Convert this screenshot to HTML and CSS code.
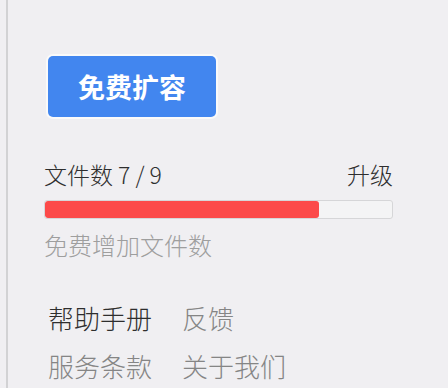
FILE: index.html
```html
<!doctype html>
<html>
<head>
	<meta charset="utf-8"/>
	<title>文件空间</title>
	<link rel="stylesheet" href="styles.css">
</head>
<body>
	<div class="panel">
		<button class="btn-expand">免费扩容</button>

		<div class="quota-row">
			<span class="quota-label">文件数 7 / 9</span>
			<span class="quota-upgrade">升级</span>
		</div>
		<div class="bar">
			<div class="bar-fill" style="width: 78.9%;"></div>
		</div>
		<div class="quota-tip">免费增加文件数</div>

		<div class="links">
			<div class="links-row">
				<span class="link link-dark">帮助手册</span>
				<span class="link">反馈</span>
			</div>
			<div class="links-row">
				<span class="link">服务条款</span>
				<span class="link">关于我们</span>
			</div>
		</div>
	</div>
</body>
</html>
```

FILE: styles.css
```css
html, body {
	margin: 0;
	height: 100%;
	background-color: #f0eff2;
}
body {
	font-family: "Noto Sans CJK SC", "Noto Sans", sans-serif;
	font-weight: 300;
	overflow: hidden;
}
.panel {
	margin-left: 6px;
	border-left: 2px solid #d2d2d4;
	height: 100%;
	padding: 56px 55px 0 36px;
	box-sizing: border-box;
}
.btn-expand {
	display: block;
	margin-left: 4px;
	width: 168px;
	height: 61px;
	border: none;
	border-radius: 5px;
	background-color: #4286ef;
	color: #fff;
	font-family: inherit;
	font-size: 27px;
	font-weight: bold;
	box-shadow: 0 0 0 2px #fafafa;
}
.quota-row {
	display: flex;
	justify-content: space-between;
	margin-top: 42px;
	font-size: 23px;
	line-height: 30px;
	color: #2e2e2e;
}
.bar {
	margin-top: 11px;
	height: 19px;
	box-sizing: border-box;
	border: 1px solid #d6d6d8;
	border-radius: 3px;
	background-color: #f4f4f5;
	overflow: hidden;
}
.bar-fill {
	height: 100%;
	background-color: #fc4a4a;
	border-radius: 3px;
}
.quota-tip {
	margin-top: 11px;
	font-size: 24px;
	line-height: 30px;
	color: #9e9e9e;
}
.links {
	margin-top: 34px;
	padding-left: 4px;
}
.links-row {
	display: flex;
	gap: 30px;
	font-size: 26px;
	line-height: 48px;
}
.link {
	color: #858585;
}
.link-dark {
	color: #2e2e2e;
}
```
